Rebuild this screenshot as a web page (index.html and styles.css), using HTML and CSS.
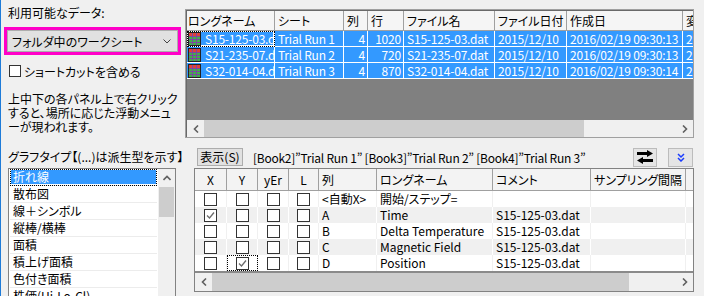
FILE: index.html
```html
<!DOCTYPE html>
<html lang="ja">
<head>
  <meta charset="UTF-8">
  <title>プロットのセットアップ</title>
  <link rel="stylesheet" href="styles.css">
</head>
<body>
<div class="dialog">

  <!-- 上パネル: 利用可能なデータ -->
  <div class="top">
    <div class="side">
      <div class="label">利用可能なデータ:</div>
      <div class="highlight">
        <div class="combo">
          <span>フォルダ中のワークシート</span>
          <svg class="chev" width="8" height="5" viewBox="0 0 8 5"><polyline points="0.5,0.5 4,4 7.5,0.5" fill="none" stroke="#444" stroke-width="1"/></svg>
        </div>
      </div>
      <div class="check-row"><span class="box"></span>ショートカットを含める</div>
      <p class="hint">上中下の各パネル上で右クリック<br>すると、場所に応じた浮動メニュ<br>ーが現われます。</p>
    </div>

    <div class="books">
      <div class="bhead">
        <div class="first">ロングネーム</div><div>シート</div><div>列</div><div>行</div><div>ファイル名</div><div>ファイル日付</div><div>作成日</div><div>変</div>
      </div>
      <div class="brow">
        <div class="name focus"><svg class="ws" width="13" height="14" viewBox="0 0 13 14"><rect x="0.5" y="0.5" width="12" height="13" fill="#41b04a" stroke="#222"/><rect x="1" y="1" width="11" height="3" fill="#e0403a"/><path d="M1 4.5h11M1 7.5h11M1 10.5h11M4.5 1v12M8.5 1v12" stroke="#7b4aa0"/></svg><span>S15-125-03.dat</span></div>
        <div>Trial Run 1</div><div class="num">4</div><div class="num">1020</div><div>S15-125-03.dat</div><div>2015/12/10</div><div>2016/02/19 09:30:13</div><div>2</div>
      </div>
      <div class="brow">
        <div class="name"><svg class="ws" width="13" height="14" viewBox="0 0 13 14"><rect x="0.5" y="0.5" width="12" height="13" fill="#41b04a" stroke="#222"/><rect x="1" y="1" width="11" height="3" fill="#e0403a"/><path d="M1 4.5h11M1 7.5h11M1 10.5h11M4.5 1v12M8.5 1v12" stroke="#7b4aa0"/></svg><span>S21-235-07.dat</span></div>
        <div>Trial Run 2</div><div class="num">4</div><div class="num">720</div><div>S21-235-07.dat</div><div>2015/12/10</div><div>2016/02/19 09:30:13</div><div>2</div>
      </div>
      <div class="brow">
        <div class="name"><svg class="ws" width="13" height="14" viewBox="0 0 13 14"><rect x="0.5" y="0.5" width="12" height="13" fill="#41b04a" stroke="#222"/><rect x="1" y="1" width="11" height="3" fill="#e0403a"/><path d="M1 4.5h11M1 7.5h11M1 10.5h11M4.5 1v12M8.5 1v12" stroke="#7b4aa0"/></svg><span>S32-014-04.dat</span></div>
        <div>Trial Run 3</div><div class="num">4</div><div class="num">870</div><div>S32-014-04.dat</div><div>2015/12/10</div><div>2016/02/19 09:30:14</div><div>2</div>
      </div>
      <div class="filler"></div>
      <div class="hscroll">
        <span class="arrow"><svg width="6" height="8" viewBox="0 0 6 8"><polyline points="5,0.5 1.5,4 5,7.5" fill="none" stroke="#606060" stroke-width="1.6"/></svg></span>
        <span class="track"><span class="thumb top-thumb"></span></span>
        <span class="arrow"><svg width="6" height="8" viewBox="0 0 6 8"><polyline points="1,0.5 4.5,4 1,7.5" fill="none" stroke="#606060" stroke-width="1.6"/></svg></span>
      </div>
    </div>
  </div>

  <!-- 下パネル: グラフタイプと列 -->
  <div class="bottom">
    <div class="side">
      <div class="label">グラフタイプ【(...)は派生型を示す】</div>
      <div class="list">
        <div class="items">
          <div class="item sel">折れ線</div>
          <div class="item">散布図</div>
          <div class="item">線＋シンボル</div>
          <div class="item">縦棒/横棒</div>
          <div class="item">面積</div>
          <div class="item">積上げ面積</div>
          <div class="item">色付き面積</div>
          <div class="item">株価(Hi-Lo-Cl)</div>
        </div>
        <div class="vscroll">
          <span class="varrow"><svg width="8" height="6" viewBox="0 0 8 6"><polyline points="0.5,5 4,1.5 7.5,5" fill="none" stroke="#606060" stroke-width="1.6"/></svg></span>
          <span class="vthumb"></span>
          <span class="vtrack"></span>
          <span class="varrow"><svg width="8" height="6" viewBox="0 0 8 6"><polyline points="0.5,1 4,4.5 7.5,1" fill="none" stroke="#606060" stroke-width="1.6"/></svg></span>
        </div>
      </div>
    </div>

    <div class="main">
      <div class="toolbar">
        <span class="btn-show">表示(S)</span>
        <span class="sources">[Book2]”Trial Run 1” [Book3]”Trial Run 2” [Book4]”Trial Run 3”</span>
        <span class="icon-btn swap">
          <svg width="16" height="14" viewBox="0 0 16 14"><path d="M0 3.5h11" stroke="#000" stroke-width="3"/><polygon points="10,0 16,3.5 10,7" fill="#000"/><path d="M5 10.5h11" stroke="#000" stroke-width="3"/><polygon points="6,7 0,10.5 6,14" fill="#000"/></svg>
        </span>
        <span class="icon-btn more">
          <svg width="8" height="9" viewBox="0 0 8 9"><polyline points="1,1 4,4 7,1" fill="none" stroke="#1a3cff" stroke-width="1.5"/><polyline points="1,5 4,8 7,5" fill="none" stroke="#1a3cff" stroke-width="1.5"/></svg>
        </span>
      </div>

      <div class="cols">
        <div class="chead">
          <div class="c">X</div><div class="c">Y</div><div class="c">yEr</div><div class="c">L</div><div>列</div><div>ロングネーム</div><div>コメント</div><div>サンプリング間隔</div><div></div>
        </div>
        <div class="crow">
          <div class="c"><span class="box"></span></div><div class="c"><span class="box"></span></div><div class="c"><span class="box"></span></div><div class="c"><span class="box"></span></div>
          <div>&lt;自動X&gt;</div><div>開始/ステップ=</div><div></div><div></div><div></div>
        </div>
        <div class="crow alt">
          <div class="c"><span class="box"><svg width="11" height="11" viewBox="0 0 11 11"><polyline points="2,5.5 4.5,8 9,2.5" fill="none" stroke="#6b6b6b" stroke-width="1.3"/></svg></span></div>
          <div class="c"><span class="box"></span></div><div class="c"><span class="box"></span></div><div class="c"><span class="box"></span></div>
          <div>A</div><div>Time</div><div>S15-125-03.dat</div><div></div><div></div>
        </div>
        <div class="crow">
          <div class="c"><span class="box"></span></div><div class="c"><span class="box"></span></div><div class="c"><span class="box"></span></div><div class="c"><span class="box"></span></div>
          <div>B</div><div>Delta Temperature</div><div>S15-125-03.dat</div><div></div><div></div>
        </div>
        <div class="crow alt">
          <div class="c"><span class="box"></span></div><div class="c"><span class="box"></span></div><div class="c"><span class="box"></span></div><div class="c"><span class="box"></span></div>
          <div>C</div><div>Magnetic Field</div><div>S15-125-03.dat</div><div></div><div></div>
        </div>
        <div class="crow">
          <div class="c"><span class="box"></span></div>
          <div class="c focus"><span class="box"><svg width="11" height="11" viewBox="0 0 11 11"><polyline points="2,5.5 4.5,8 9,2.5" fill="none" stroke="#6b6b6b" stroke-width="1.3"/></svg></span></div>
          <div class="c"><span class="box"></span></div><div class="c"><span class="box"></span></div>
          <div>D</div><div>Position</div><div>S15-125-03.dat</div><div></div><div></div>
        </div>
        <div class="cline"></div>
        <div class="hscroll">
          <span class="arrow"><svg width="6" height="8" viewBox="0 0 6 8"><polyline points="5,0.5 1.5,4 5,7.5" fill="none" stroke="#606060" stroke-width="1.6"/></svg></span>
          <span class="track"><span class="thumb bottom-thumb"></span></span>
          <span class="arrow"><svg width="6" height="8" viewBox="0 0 6 8"><polyline points="1,0.5 4.5,4 1,7.5" fill="none" stroke="#606060" stroke-width="1.6"/></svg></span>
        </div>
      </div>
    </div>
  </div>

</div>
</body>
</html>
```

FILE: styles.css
```css
body {
  margin: 0;
  background: #f0f0f0;
  font-family: "Noto Sans CJK JP", "Noto Sans", sans-serif;
  font-size: 12px;
  font-feature-settings: "palt";
  color: #000;
  overflow: hidden;
}

.dialog {
  height: 296px;
  border-left: 1px solid #1e7bd8;
  box-sizing: border-box;
  overflow: hidden;
}

.label {
  line-height: 16px;
  white-space: nowrap;
}

/* ---------- top ---------- */

.top {
  display: flex;
  height: 140px;
}

.top .side {
  width: 184px;
  flex: none;
  padding: 5px 0 0 7px;
  box-sizing: border-box;
}

.highlight {
  width: 177px;
  margin: 6px 0 0 -4px;
  border: 3px solid #ff00c8;
  box-sizing: border-box;
}

.combo {
  height: 20px;
  display: flex;
  align-items: center;
  justify-content: space-between;
  padding: 0 6px 0 4px;
  border: 1px solid #adadad;
  background: #e1e1e1;
  white-space: nowrap;
}

.check-row {
  display: flex;
  align-items: center;
  gap: 3px;
  height: 14px;
  margin: 9px 0 0 1px;
  white-space: nowrap;
}

.box {
  width: 13px;
  height: 13px;
  flex: none;
  box-sizing: border-box;
  border: 1px solid #333;
  background: #fff;
  display: flex;
  align-items: center;
  justify-content: center;
}

.check-row .box {
  width: 12px;
  height: 12px;
}

.hint {
  margin: 14px 0 0;
  line-height: 14px;
  white-space: nowrap;
}

.books {
  width: 509px;
  height: 129px;
  margin-top: 9px;
  box-sizing: border-box;
  border: 1px solid #a0a0a0;
  padding: 1px 0 0 1px;
  box-shadow: inset 1px 1px 0 #696969;
  display: flex;
  flex-direction: column;
  overflow: hidden;
}

.bhead,
.brow {
  display: grid;
  grid-template-columns: 88px 69px 24px 36px 91px 72px 116px 40px;
}

.bhead div {
  height: 20px;
  line-height: 20px;
  padding-left: 3px;
  background: #f5f5f5;
  border-right: 1px solid #a0a0a0;
  border-bottom: 1px solid #a0a0a0;
  box-sizing: border-box;
  white-space: nowrap;
  overflow: hidden;
}

.bhead .first {
  padding-left: 1px;
}

.brow div {
  height: 16px;
  line-height: 16px;
  padding: 0 3px;
  background: #3399ff;
  color: #fff;
  border-right: 1px solid #fff;
  border-bottom: 1px solid #fff;
  box-sizing: border-box;
  white-space: nowrap;
  overflow: hidden;
  letter-spacing: -0.2px;
}

.brow .num {
  text-align: right;
  padding-right: 2px;
}

.brow .name {
  display: flex;
  align-items: center;
  gap: 4px;
  padding: 0 0 0 1px;
}

.brow .name span {
  overflow: hidden;
}

.ws {
  flex: none;
}

.focus {
  box-shadow: inset 0 0 0 1px #fff;
  outline: 1px dotted #000;
  outline-offset: -1px;
}

.filler {
  flex: 1;
  background: #808080;
}

.hscroll {
  height: 17px;
  flex: none;
  display: flex;
  background: #f0f0f0;
}

.arrow {
  width: 17px;
  flex: none;
  display: flex;
  align-items: center;
  justify-content: center;
}

.track {
  flex: 1;
  display: flex;
}

.thumb {
  background: #cdcdcd;
}

.top-thumb {
  width: 380px;
}

.bottom-thumb {
  width: 417px;
}

/* ---------- bottom ---------- */

.bottom {
  display: flex;
  height: 156px;
}

.bottom .side {
  width: 185px;
  flex: none;
  padding: 9px 0 0 7px;
  box-sizing: border-box;
}

.list {
  width: 168px;
  height: 140px;
  margin-top: 3px;
  box-sizing: border-box;
  border: 1px solid #828282;
  padding-left: 1px;
  background: #fff;
  display: flex;
}

.items {
  width: 147px;
  flex: none;
}

.item {
  height: 16px;
  line-height: 15px;
  padding-left: 3px;
  border-bottom: 1px solid #ececec;
  white-space: nowrap;
}

.item.sel {
  background: #3399ff;
  color: #fff;
  box-shadow: inset 0 0 0 1px #fff;
  outline: 1px dotted #000;
  outline-offset: -1px;
}

.vscroll {
  width: 17px;
  margin-left: 1px;
  background: #f0f0f0;
  display: flex;
  flex-direction: column;
}

.varrow {
  height: 17px;
  flex: none;
  display: flex;
  align-items: center;
  justify-content: center;
}

.vthumb {
  height: 30px;
  margin: 1px 1px 0;
  background: #cdcdcd;
}

.vtrack {
  flex: 1;
}

.main {
  flex: 1;
  padding: 8px 0 0 8px;
}

.toolbar {
  width: 499px;
  height: 18px;
  display: flex;
  align-items: center;
}

.btn-show {
  width: 46px;
  height: 18px;
  margin-left: 3px;
  box-sizing: border-box;
  border: 1px solid #adadad;
  background: #e1e1e1;
  line-height: 16px;
  text-align: center;
}

.sources {
  margin-left: 10px;
  white-space: nowrap;
  letter-spacing: -0.25px;
}

.icon-btn {
  width: 24px;
  height: 19px;
  box-sizing: border-box;
  border: 1px solid #bcbcbc;
  background: #e5e5e5;
  display: flex;
  align-items: center;
  justify-content: center;
}

.swap {
  margin-left: auto;
}

.more {
  width: 25px;
  margin-left: 11px;
}

.cols {
  width: 500px;
  height: 124px;
  margin-top: 2px;
  box-sizing: border-box;
  border: 1px solid #828282;
  display: flex;
  flex-direction: column;
  overflow: hidden;
  background: #fff;
}

.chead,
.crow {
  display: grid;
  grid-template-columns: 32px 31px 31px 30px 58px 116px 98px 95px 40px;
}

.chead div {
  height: 22px;
  line-height: 21px;
  padding-left: 3px;
  background: #f3f3f3;
  border-right: 1px solid #a0a0a0;
  border-bottom: 1px solid #a0a0a0;
  box-sizing: border-box;
  white-space: nowrap;
  overflow: hidden;
}

.chead .c {
  padding: 0;
  text-align: center;
}

.crow div {
  height: 16px;
  line-height: 16px;
  padding-left: 3px;
  border-right: 1px solid #f0f0f0;
  box-sizing: border-box;
  white-space: nowrap;
  overflow: hidden;
}

.crow.alt div {
  background: #f0f0f0;
  border-right-color: #fff;
}

.crow .c {
  padding: 0;
  display: flex;
  align-items: center;
  justify-content: center;
}

.cline {
  height: 2px;
  flex: none;
  background: #8a8a8a;
}

.cols .hscroll {
  flex: 1;
}
```
